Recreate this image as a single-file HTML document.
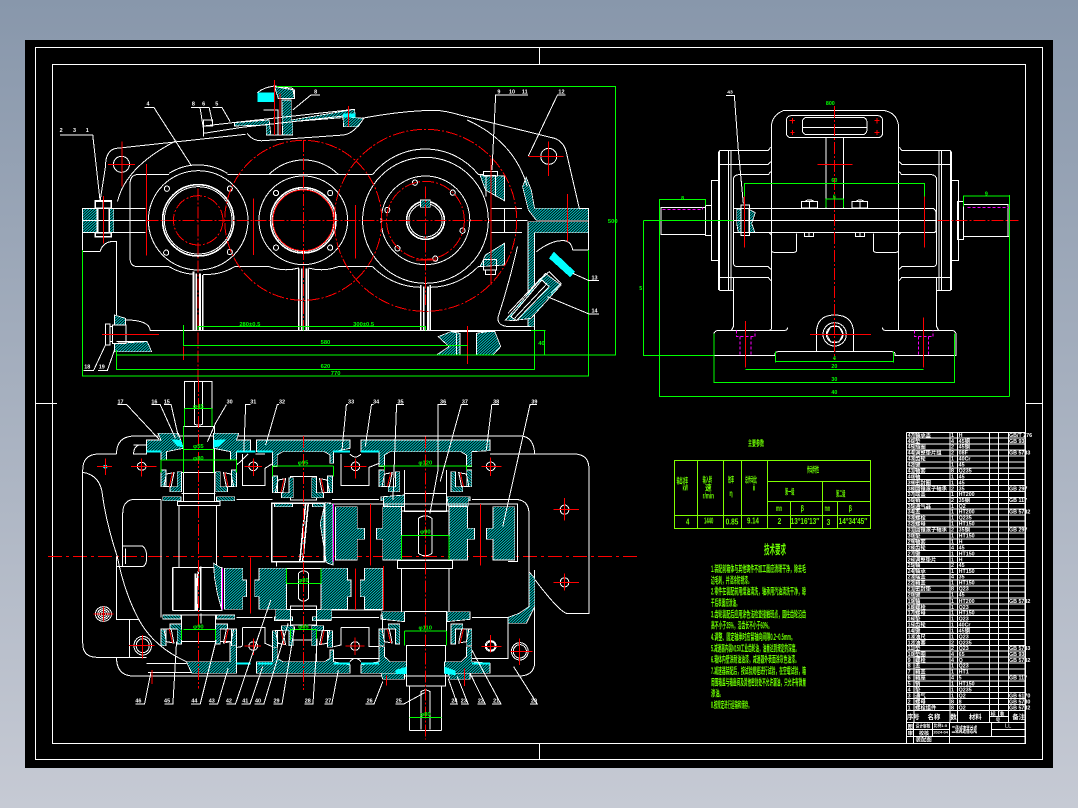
<!DOCTYPE html>
<html><head><meta charset="utf-8"><title>减速器装配图</title>
<style>
html,body{margin:0;padding:0;width:1078px;height:808px;overflow:hidden;background:linear-gradient(#8897ab,#c6cad4)}
svg{display:block;position:absolute;left:0;top:0;shape-rendering:crispEdges}
svg *{vector-effect:non-scaling-stroke}
.w{stroke:#fff;fill:none;stroke-width:1}
.t{stroke:#fff;fill:none;stroke-width:1.6}
.r{stroke:#f00;fill:none;stroke-width:1}
.rd{stroke:#f00;fill:none;stroke-width:1;stroke-dasharray:12 2 2 2}
.g{stroke:#0f0;fill:none;stroke-width:1}
.y{stroke:#80ff00;fill:none;stroke-width:1}
.m{stroke:#f0f;fill:none;stroke-width:1;stroke-dasharray:3 2}
.h{fill:url(#hatch);stroke:#fff;stroke-width:.8}
.c{fill:#0ff;stroke:none}
text{font-family:"Liberation Sans","Noto Sans CJK SC",sans-serif;font-weight:bold}
.lw{fill:#fff;font-size:15px;text-anchor:middle}
.lg{fill:#0f0;font-size:16px;text-anchor:middle}
.ly{fill:#6cff00;font-size:27px}
.bm{fill:#fff;font-size:16px}
</style></head><body>
<svg width="1078" height="808" viewBox="0 0 1078 808">
<defs>
<pattern id="hatch" patternUnits="userSpaceOnUse" width="8" height="8"><rect width="8" height="8" fill="#000"/><path d="M-2 2L2 -2M0 8L8 0M6 10L10 6" stroke="#0cc" stroke-width="1.9"/></pattern>
<g id="brg">
<polygon class="h" points="0,0 14,0 14,50 0,50"/>
<polygon class="h" points="45,5 57,5 57,65 25,65 25,50 45,50"/>
<polygon class="w" points="15,12 36,8 28,50 8,50"/>
<path class="r" d="M32 8L23 50"/>
<polygon class="h" points="5,80 55,80 55,92 5,92"/>
</g>
</defs>
<rect x="25" y="40" width="1028" height="728" fill="#000"/>
<path class="w" d="M35.5 47.5H1042.5V759.5H35.5ZM52.5 64.5H1025.5V743.5H52.5ZM35 403.5H57M1025 403.5H1043M539.5 47V64M539.5 743V760"/>
<path d="M48 556.5H640" stroke="#f00" stroke-width="1" stroke-dasharray="14 4 3 4" fill="none"/>

<!-- FRONT VIEW -->
<g transform="translate(60 70) scale(.36364 .33333)">
<polygon class="h" points="62,415 103,415 103,488 62,488"/>
<polygon class="h" points="135,415 148,415 148,488 135,488"/>
<polygon class="h" points="1305,415 1453,415 1453,451 1310,451 1288,420 1272,350 1282,322 1296,360"/>
<polygon class="h" points="1305,455 1453,455 1453,488 1305,488 1305,770 1287,770 1287,455"/>
<polygon class="h" points="1155,315 1222,318 1222,392 1170,360"/>
<polygon class="h" points="1170,555 1222,520 1222,585 1155,590"/>
<polygon class="h" points="1225,750 1335,610 1378,645 1295,745 1245,752"/>
<polygon class="c" points="1358,545 1416,605 1403,622 1345,565"/>
<polygon class="w" points="1240,740 1325,630 1345,650 1255,752" fill="#000" style="fill:#000"/>
<polygon class="h" points="150,735 180,745 180,765 150,765"/>
<polygon class="h" points="150,820 240,815 252,845 150,845"/>
<polygon class="h" points="1040,800 1075,785 1100,790 1100,855 1035,855 1070,830"/>
<polygon class="h" points="1145,790 1195,782 1212,830 1190,855 1145,855"/>
<polygon class="h" points="480,158 575,150 580,195 612,195 610,90 636,90 636,150 810,118 812,140 640,155 640,195 567,195 567,165 480,168"/>
<polygon class="h" points="778,140 835,145 820,170 780,170"/>
<rect class="c" x="778" y="130" width="35" height="12"/>
<polygon class="h" points="590,50 645,60 645,85 600,85"/>
<rect class="c" x="543" y="68" width="48" height="28"/>
<path class="w" d="M125 290Q125 240 155 235L510 193M830 145Q940 122 1030 121Q1060 122 1100 135L1360 205Q1385 215 1392 245L1428 415H1453V540H1410Q1405 510 1380 512Q1350 512 1310 545M125 290L110 395M158 395Q180 290 320 212M1120 150Q1250 215 1285 350M1258 530Q1235 640 1205 740Q1200 770 1240 770H1295"/>
<path class="w" d="M215 313Q195 315 193 335V570Q195 590 215 590H300M215 313H300M460 313H860M480 590H575M765 590H860M1150 313H1165M1150 590H1165"/>
<path class="w" d="M62 415H235M62 451H235M62 488H235M62 415V545H110Q120 510 155 515V735M1185 415H1270M1185 451H1285M1185 488H1270M1222 415V488"/>
<path class="w" d="M248 781H1305V855M180 750Q245 750 248 781M1305 781V770M240 815H155"/>
<path class="t" d="M367 605V780M375 610V780M385 610V780M393 615V780M657 595V780M665 595V780M677 595V780M683 595V780M992 645V780M1000 650V780M1012 650V780M1018 645V780"/>
<path class="w" d="M300 310A150 164 0 0 1 460 310M300 590A150 164 0 0 0 367 613M393 613A150 164 0 0 0 480 590M575 313A134 146 0 0 1 765 313M575 590A134 146 0 0 0 657 594M683 594A134 146 0 0 0 765 590M860 313A186 203 0 0 1 1150 313M860 590A186 203 0 0 0 992 652M1018 652A186 203 0 0 0 1150 590"/>
<ellipse class="w" cx="380" cy="451" rx="137" ry="149"/>
<ellipse class="t" cx="380" cy="451" rx="98" ry="107"/>
<ellipse class="w" cx="380" cy="451" rx="93" ry="101"/>
<ellipse class="w" cx="669" cy="451" rx="122" ry="133"/>
<ellipse class="t" cx="669" cy="451" rx="90" ry="98"/>
<ellipse class="w" cx="669" cy="451" rx="85" ry="93"/>
<ellipse class="w" cx="1005" cy="451" rx="173" ry="189"/>
<ellipse class="w" cx="1005" cy="451" rx="122" ry="133"/>
<ellipse class="t" cx="1005" cy="451" rx="52" ry="57"/>
<ellipse class="w" cx="1005" cy="451" rx="46" ry="50"/>
<rect class="h" x="991" y="390" width="27" height="22"/>
<ellipse class="w" cx="169" cy="283" rx="22" ry="24"/>
<ellipse class="w" cx="1344" cy="259" rx="22" ry="24"/>
<g class="w"><ellipse cx="294" cy="356" rx="7" ry="8"/><ellipse cx="467" cy="356" rx="7" ry="8"/><ellipse cx="292" cy="548" rx="7" ry="8"/><ellipse cx="467" cy="546" rx="7" ry="8"/><ellipse cx="594" cy="369" rx="7" ry="8"/><ellipse cx="743" cy="369" rx="7" ry="8"/><ellipse cx="594" cy="533" rx="7" ry="8"/><ellipse cx="743" cy="533" rx="7" ry="8"/><ellipse cx="976" cy="338" rx="7" ry="8"/><ellipse cx="1080" cy="368" rx="7" ry="8"/><ellipse cx="900" cy="420" rx="7" ry="8"/><ellipse cx="1107" cy="482" rx="7" ry="8"/><ellipse cx="928" cy="535" rx="7" ry="8"/><ellipse cx="1032" cy="566" rx="7" ry="8"/></g>
<path class="t" d="M103 415H135V488H103ZM97 393H141V415H97ZM97 488H141V500H97ZM119 393V415"/>
<path class="w" d="M1165 305H1203V318H1165ZM1172 318V380M1197 318V380M1165 568H1200V600H1165ZM1170 600H1198V613H1170Z"/>
<path class="w" d="M145 765H182V820H145ZM125 762H137V825H125ZM137 770H145M137 815H145"/>
<path class="w" d="M395 168L500 155L810 118M395 190L500 172L780 138M395 150H420V168H395ZM395 168V200M515 190Q530 215 560 212L780 195Q810 190 835 145M560 120H600V195M543 68Q560 52 590 48L640 55L645 85H600M1090 790V855M1145 790V855M1075 785H1195"/>
<path class="w" d="M1250 745L1340 640M1232 730L1322 625M1320 630L1345 605L1378 640L1350 670"/>
<path class="rd" d="M238 451H1185M380 355V930M669 210V780M1005 350V705"/>
<path class="r" d="M238 282V557M532 385V555M813 405V565M1185 265V645M1395 372V515M120 378V520M170 215V350M132 283H206M1288 259H1384M1344 215V318M590 30V195M605 70V195M793 108V170M115 793H272M1120 768V882M340 830V870M979 570H1035"/>
<g class="rd"><ellipse cx="669" cy="451" rx="216" ry="240"/><ellipse cx="1005" cy="451" rx="251" ry="273"/><ellipse cx="380" cy="451" rx="68" ry="74"/><ellipse cx="1005" cy="451" rx="107" ry="117"/></g>
<ellipse cx="669" cy="451" rx="83" ry="91" class="r"/>
<path class="g" d="M62 540V918H1453V540M595 49H1527V855H155M155 840V898H1305V781M340 765V826H1120M380 768V780M380 770H1005V782M1295 781H1335M1333 781V855M669 770V782"/>
<text class="lg" x="522" y="768">280±0.5</text><text class="lg" x="835" y="768">300±0.5</text><text class="lg" x="730" y="822">580</text><text class="lg" x="730" y="894">620</text><text class="lg" x="758" y="915">770</text><text class="lg" x="1324" y="825">40</text><text class="lg" x="1520" y="459">500</text>
<path class="w" d="M0 195H90L110 390M232 112H258L360 285M360 112H385L395 180M385 112H410L420 160M420 112H445L468 155M715 75H690L640 120M1287 75H1198L1188 300M1390 75H1368L1288 258M1482 632H1455L1410 610M1482 732H1455L1340 680M65 902H92L125 825M105 902H130L150 840"/>
<g class="lw"><text x="3" y="186">2</text><text x="40" y="186">3</text><text x="75" y="186">1</text><text x="242" y="106">4</text><text x="367" y="106">8</text><text x="395" y="106">6</text><text x="431" y="106">5</text><text x="703" y="71">8</text><text x="1207" y="71">9</text><text x="1243" y="71">10</text><text x="1278" y="71">11</text><text x="1379" y="71">12</text><text x="1470" y="628">13</text><text x="1470" y="728">14</text><text x="75" y="896">18</text><text x="115" y="896">19</text></g>
</g>

<!-- TOP VIEW (plan) -->
<g transform="translate(70 380) scale(.36364 .33333)">
<path class="w" d="M128 222Q128 170 175 168H1240Q1275 170 1278 222M128 222H75Q35 225 35 270V790Q35 832 75 832H210M1155 222H1390Q1427 225 1427 265V700H1365Q1340 690 1262 575M128 832Q128 888 175 888H1240Q1275 885 1278 850V570M145 400Q145 358 180 358H250M1105 358H1225Q1262 360 1262 400V680Q1262 712 1225 712H1105M145 400V560H128V718H190M128 530V560M35 277Q85 285 90 350Q100 430 130 530Q150 640 190 720Q230 800 320 845M145 498H200Q212 510 210 530Q212 555 200 560H145M152 505V552M163 832V718M250 358V712M458 358H557M720 358H850M458 712H557M720 712H850M1205 712V835L1105 835M215 878H355M210 850H320M175 195H210V222H175Q175 200 190 195"/>
<path class="w" d="M315 5H390V140H315ZM342 5V130Q342 135 353 135Q365 135 365 130V5M312 140H397V365H312ZM307 278H400M307 340H400M295 365H413V377H295ZM300 377V562M403 377V562M283 562H418V692H283Z"/>
<path class="t" d="M283 562V692M355 562Q345 620 350 692M345 580V690M360 560V690"/>
<path class="w" d="M307 705H400V785H307ZM295 785H440M360 700V730"/>
<path class="w" d="M933 918H1022V1048Q1022 1052 1018 1052H938Q933 1052 933 1048ZM965 1048V935Q978 925 990 935V1048M925 797H1032V918H925ZM920 695H1035V797M900 542H1052V565H900ZM912 565V695M1042 565V695M920 270V395H1035V270M920 340H1035"/>
<path class="w" d="M958 415Q978 400 995 415V520Q978 535 958 520ZM628 580Q642 565 656 580V655Q642 672 628 655Z"/>
<path class="w" d="M606 290H678V360H606ZM606 678H678V735H606ZM606 780H678V850M720 690H860M568 560V545H700M860 700V812"/>
<path class="w" d="M474 222V316H536V265L558 250M458 255Q474 240 490 222M536 222L510 222M745 222V316H822V262L850 250M770 222Q785 240 800 222M474 742V795Q474 802 458 802M474 742H536V790L557 800M745 742H822V800H850M745 742V795L725 800M770 845Q785 825 800 845M850 835H725"/>
<circle class="w" cx="197" cy="259" r="12"/><ellipse class="w" cx="504" cy="259" rx="12" ry="13"/><ellipse class="w" cx="785" cy="259" rx="12" ry="13"/><ellipse class="w" cx="1157" cy="259" rx="12" ry="13"/><ellipse class="w" cx="504" cy="798" rx="12" ry="13"/><ellipse class="w" cx="784" cy="798" rx="12" ry="13"/><ellipse class="w" cx="1157" cy="798" rx="15" ry="16"/><ellipse class="w" cx="1157" cy="798" rx="12" ry="13"/>
<ellipse class="w" cx="1237" cy="814" rx="23" ry="26"/><ellipse class="w" cx="1237" cy="814" rx="18" ry="20"/><ellipse class="w" cx="200" cy="797" rx="24" ry="28"/><ellipse class="w" cx="200" cy="797" rx="18" ry="21"/>
<ellipse class="w" cx="1360" cy="389" rx="12" ry="14"/><ellipse class="w" cx="1360" cy="607" rx="12" ry="14"/>
<circle class="c" cx="97" cy="260" r="6"/>
<g class="w"><circle cx="92" cy="702" r="22"/><circle cx="92" cy="702" r="16"/><circle cx="92" cy="702" r="11"/><circle cx="92" cy="702" r="6"/></g>
<polygon class="h" points="210,180 250,180 242,160 298,160 312,205 265,215 265,240 250,240 250,215 210,215"/>
<polygon class="h" points="496,180 458,180 464,160 395,160 395,205 441,215 441,240 458,240 458,215 496,215"/>
<polygon class="h" points="513,180 770,180 770,205 725,215 725,250 715,250 715,225 700,215 585,215 570,225 570,260 557,260 557,215 513,215"/>
<polygon class="h" points="800,180 1155,180 1155,212 1105,215 1105,260 1090,260 1090,225 1075,215 880,215 865,225 865,260 850,260 850,215 800,215"/>
<polygon class="h" points="320,845 440,845 440,790 458,770 458,880 335,880"/>
<polygon class="h" points="513,880 770,880 770,855 725,845 725,810 715,810 715,835 700,845 585,845 570,835 570,800 557,800 557,845 513,845"/>
<polygon class="h" points="800,880 925,880 925,845 880,845 865,830 865,800 850,800 850,845 800,855"/>
<polygon class="h" points="1030,880 1155,880 1155,850 1105,845 1105,800 1090,800 1090,830 1075,845 1030,845"/>
<polygon class="h" points="855,880 920,880 920,898 860,898"/>
<polygon class="h" points="1040,880 1100,880 1100,898 1045,898"/>
<polygon class="h" points="1262,575 1278,595 1278,680 1255,730 1205,730 1205,712 1235,700 1262,680"/>
<g class="c"><rect x="210" y="212" width="40" height="6"/><rect x="458" y="212" width="52" height="6"/><rect x="515" y="212" width="42" height="6"/><rect x="725" y="212" width="45" height="6"/><rect x="800" y="212" width="50" height="6"/><rect x="458" y="848" width="38" height="6"/><rect x="515" y="848" width="42" height="6"/><rect x="725" y="848" width="45" height="6"/><rect x="800" y="848" width="50" height="6"/><rect x="1105" y="848" width="50" height="6"/><polygon points="278,178 305,180 312,203 295,198"/><polygon points="430,178 395,180 395,203 412,198"/><polygon points="895,870 925,860 925,882 895,882"/><polygon points="1030,860 1060,872 1060,885 1030,882"/></g>
<use href="#brg" transform="translate(250 270)"/>
<use href="#brg" transform="translate(458 270) scale(-1 1)"/>
<use href="#brg" transform="translate(557 288)"/>
<use href="#brg" transform="translate(722 288) scale(-1 1)"/>
<use href="#brg" transform="translate(850 270)"/>
<use href="#brg" transform="translate(1105 270) scale(-1 1)"/>
<use href="#brg" transform="translate(250 797) scale(1 -1)"/>
<use href="#brg" transform="translate(458 797) scale(-1 -1)"/>
<use href="#brg" transform="translate(557 802) scale(1 -1)"/>
<use href="#brg" transform="translate(722 802) scale(-1 -1)"/>
<use href="#brg" transform="translate(850 797) scale(1 -1)"/>
<use href="#brg" transform="translate(1105 797) scale(-1 -1)"/>
<polygon class="h" points="730,380 790,380 790,445 810,445 810,478 790,478 790,540 730,540"/>
<polygon class="h" points="860,380 912,380 912,540 860,540 860,478 843,478 843,445 860,445"/>
<polygon class="h" points="1042,380 1093,380 1093,445 1112,445 1112,478 1093,478 1093,540 1042,540"/>
<polygon class="h" points="1163,380 1223,380 1223,540 1163,540 1163,478 1145,478 1145,445 1163,445"/>
<polygon class="h" points="425,565 475,565 475,600 485,600 485,650 475,650 475,688 425,688"/>
<polygon class="h" points="520,565 595,565 595,688 520,688 520,650 508,650 508,600 520,600"/>
<polygon class="h" points="690,565 763,565 763,600 773,600 773,650 763,650 763,688 690,688"/>
<polygon class="h" points="810,565 860,565 860,688 810,688 810,650 798,650 798,600 810,600"/>
<polygon class="h" points="702,368 723,372 723,555 705,548 688,430"/>
<polygon class="h" points="395,550 417,565 417,688 405,640 397,590"/>
<polygon class="h" points="862,350 920,345 920,380 862,378"/>
<polygon class="h" points="1037,350 1095,350 1095,378 1040,378"/>
<polygon class="h" points="857,695 920,695 920,725 860,718"/>
<polygon class="h" points="1037,695 1100,695 1100,718 1037,725"/>
<polygon class="h" points="566,688 606,688 606,720 566,720"/>
<polygon class="h" points="678,688 720,688 720,720 678,720"/>
<path class="t" d="M555 370H700V545H555ZM648 372Q640 450 632 545M655 372Q648 450 640 545"/>
<path class="w" d="M912 393H1042M912 540H1042M912 393V540M1042 393V540M595 565H690M595 688H690M725 372H1230V545H1205"/>
<path class="rd" d="M353 0V925M642 168V930M978 170V1078"/>
<path class="r" d="M827 372V557M1129 372V557M496 533V700M785 565V690M862 558V690M97 235V285M74 260H116M168 260H238M197 236V290M480 260H528M504 236V288M754 260H815M785 236V296M1132 260H1186M1157 232V288M1330 388H1400M1360 354V422M1330 607H1400M1360 580V632M480 798H525M504 775V825M758 798H810M784 772V825M1132 799H1187M1157 765V818M1212 814H1272M1236 775V855M162 797H232M199 765V835M65 702H120M92 680V725M225 870V912M870 886V916M1085 866V918"/>
<path d="M725 372V545M420 565V688" stroke="#f0f" fill="none"/>
<path class="g" d="M250 240H458M250 240V278M458 240V278M312 208H395M312 140V278M395 208V278M315 85H390M315 85V140M390 85V140M557 258H725M557 258V290M725 258V290M850 258H1105M865 258V270M1090 258V270M912 466H1042M912 466V540M1042 466V540M595 610H690M595 565V610M690 565V610M312 748H400M307 748V780M400 748V780M606 748H678M606 748V778M678 748V778M920 753H1035M920 753V797M1035 753V797M933 1012H1022"/>
<g class="lg"><text x="353" y="84">φ45</text><text x="353" y="204">φ55</text><text x="353" y="240">φ80</text><text x="641" y="254">φ95</text><text x="977" y="254">φ120</text><text x="977" y="461">φ90</text><text x="642" y="606">φ80</text><text x="353" y="746">φ90</text><text x="642" y="746">φ85</text><text x="977" y="749">φ110</text><text x="977" y="1008">φ80</text></g>
<path class="w" d="M130 74H156L245 178M224 74H248L290 175M258 74H278L298 170M430 74L400 130L378 185M496 74H483L478 215M575 74H570L538 195M765 74H760L748 210M834 74H829L812 200M918 74H898L888 360M1036 74H1012L1012 270L990 400M1095 74H1076L1018 305M1180 74H1160L1145 210M1284 74H1265L1190 440"/>
<path class="w" d="M180 972H205L222 880M260 972H283L293 785M333 972H358L402 780M382 972H406L435 865M430 972H455L552 660M472 972H495L530 860M507 972H533L600 730M560 972H583L618 740M645 972H668L680 775M700 972H720L738 870M812 972H836L860 905M895 972H918L975 938M1045 972H1065L1040 895M1075 972H1095L1065 890M1120 972H1142L1100 880M1160 972H1185L1105 810M1265 972H1285L1220 860"/>
<g class="lw"><text x="139" y="71">17</text><text x="232" y="71">16</text><text x="266" y="71">15</text><text x="439" y="71">30</text><text x="504" y="71">31</text><text x="583" y="71">32</text><text x="773" y="71">33</text><text x="842" y="71">34</text><text x="909" y="71">35</text><text x="1026" y="71">36</text><text x="1086" y="71">37</text><text x="1172" y="71">38</text><text x="1277" y="71">39</text>
<text x="188" y="968">46</text><text x="267" y="968">45</text><text x="342" y="968">44</text><text x="390" y="968">43</text><text x="437" y="968">42</text><text x="482" y="968">41</text><text x="517" y="968">40</text><text x="568" y="968">29</text><text x="654" y="968">28</text><text x="710" y="968">27</text><text x="824" y="968">26</text><text x="904" y="968">25</text><text x="1057" y="968">24</text><text x="1083" y="968">23</text><text x="1130" y="968">22</text><text x="1172" y="968">21</text><text x="1276" y="968">20</text></g>
</g>

<!-- SIDE VIEW -->
<g transform="translate(640 70) scale(.33333)">
<path class="h" d="M290 418H303V488H295L290 460Z"/>
<path class="h" d="M327 418L346 428L335 460L345 488H327Z"/>
<path class="w" d="M394 240V170Q396 135 430 122H735Q772 130 776 170V780M394 240V775Q394 780 388 781"/>
<rect class="w" x="439" y="137" width="289" height="66" rx="14"/><rect class="w" x="487" y="142" width="194" height="52" rx="14"/>
<path class="w" d="M487 172H681M558 203V415M611 203V415M280 415H880Q888 420 888 430V480Q888 488 880 488H280M280 451H888M303 405H328V497H303Z"/>
<g id="sv"><path class="w" d="M238 241H385L392 232M238 283H385L392 275M295 314H385L392 305M295 314Q280 316 280 330V580Q282 590 292 590H385L392 598M238 622H385L392 632M238 661H280M238 241V661M235 245V660M265 241V661M273 241V661M280 622V770L275 780M214 331H235V572H214ZM470 490V540Q470 547 462 547H402Q396 547 394 540M388 488L394 495M443 772Q442 781 435 781H235Q225 782 222 790V856H405V850Q408 845 415 845H584"/></g>
<use href="#sv" transform="translate(1170 0) scale(-1 1)"/>
<path class="w" d="M197 406H214V496H197ZM63 412H197V494H63ZM58 412V490M953 394H971V509H953ZM971 403H1104V499H971ZM1104 403V499H1108M484 394H533V414H484ZM508 394V414M495 394Q508 385 522 394M636 394H683V414H636ZM660 394V414M648 394Q660 385 672 394M493 488H521V500H493ZM507 488V500M646 488H674V500H646ZM660 488V500"/>
<path class="w" d="M529 845V790Q530 735 584 735Q640 735 641 790V845"/>
<circle class="w" cx="584" cy="793" r="35"/><circle class="w" cx="584" cy="793" r="25"/><polygon class="w" points="560,793 572,770 597,770 609,793 597,816 572,816"/>
<path class="m" d="M68 418H188V412M982 412H1110M289 782V800H345V782M300 800V856M333 800V856M823 782V800H879V782M835 800V856M865 800V856"/>
<path class="rd" d="M584 108V870M893 451H1135"/>
<path class="r" d="M313 380V533M853 380V533M533 283H638M510 793H693M316 753V893M850 743V893M449 152H465M457 144V160M703 152H719M711 144V160M452 187H463M457 180V195M704 187H718M711 180V195"/>
<path class="g" d="M313 380V340H853V380M58 490V388H197V406M970 410V378H1108M1108 375V980M58 490V980H1108M10 451H280M10 451V856H222M222 790V937H943V790M316 898H850M406 845V878M406 875H760M760 845V878M558 412V387H611V412"/>
<g class="lg"><text x="571" y="105">800</text><text x="583" y="336">60</text><text x="583" y="386">6</text><text x="583" y="870">4</text><text x="583" y="894">20</text><text x="583" y="933">30</text><text x="583" y="972">40</text><text x="128" y="390">8</text><text x="1039" y="376">9</text><text x="2" y="660">5</text></g>
<path class="w" d="M258 76H283L295 240L310 400"/>
<text class="lw" x="270" y="71">43</text>
</g>

<!-- TABLE + NOTES -->
<g transform="translate(660 420) scale(.33333)">
<path class="y" d="M44 122H632V325H44ZM44 286H632M322 185H632M322 245H632M112 122V325M190 122V325M244 122V325M322 122V325M391 245V325M487 185V325M532 245V325"/>
<g class="ly" style="font-size:24px">
<text x="264" y="78" textLength="48" lengthAdjust="spacingAndGlyphs">主要参数</text>
<text x="50" y="190" textLength="34" lengthAdjust="spacingAndGlyphs">输出功率</text><text x="68" y="212" textLength="16" lengthAdjust="spacingAndGlyphs">kW</text>
<text x="128" y="188" textLength="28" lengthAdjust="spacingAndGlyphs">输入转</text><text x="135" y="212" textLength="20" lengthAdjust="spacingAndGlyphs">速</text><text x="128" y="236" textLength="34" lengthAdjust="spacingAndGlyphs">r/min</text>
<text x="204" y="188" textLength="18" lengthAdjust="spacingAndGlyphs">效率</text><text x="208" y="228" textLength="10" lengthAdjust="spacingAndGlyphs">η</text>
<text x="255" y="188" textLength="36" lengthAdjust="spacingAndGlyphs">总传动比</text><text x="278" y="212" textLength="8" lengthAdjust="spacingAndGlyphs">i</text>
<text x="441" y="158" textLength="36" lengthAdjust="spacingAndGlyphs">传动特性</text>
<text x="375" y="223" textLength="28" lengthAdjust="spacingAndGlyphs">第一级</text><text x="528" y="229" textLength="28" lengthAdjust="spacingAndGlyphs">第二级</text>
<text x="348" y="273" textLength="18" lengthAdjust="spacingAndGlyphs">mn</text><text x="422" y="273" textLength="10" lengthAdjust="spacingAndGlyphs">β</text><text x="494" y="273" textLength="16" lengthAdjust="spacingAndGlyphs">mn</text><text x="566" y="273" textLength="10" lengthAdjust="spacingAndGlyphs">β</text>
<text x="78" y="313" textLength="10" lengthAdjust="spacingAndGlyphs">4</text><text x="132" y="310" textLength="28" lengthAdjust="spacingAndGlyphs">1440</text><text x="197" y="313" textLength="38" lengthAdjust="spacingAndGlyphs">0.85</text><text x="261" y="311" textLength="36" lengthAdjust="spacingAndGlyphs">9.14</text><text x="353" y="312" textLength="11" lengthAdjust="spacingAndGlyphs">2</text><text x="392" y="312" textLength="86" lengthAdjust="spacingAndGlyphs">13°16′13″</text><text x="500" y="315" textLength="11" lengthAdjust="spacingAndGlyphs">3</text><text x="536" y="312" textLength="86" lengthAdjust="spacingAndGlyphs">14°34′45″</text>
</g>
<text class="ly" x="312" y="402" textLength="66" lengthAdjust="spacingAndGlyphs" style="font-size:38px">技术要求</text>
<g class="ly">
<text x="153" y="456" textLength="285" lengthAdjust="spacingAndGlyphs">1.装配前箱体与其他铸件不加工面应清理干净，除去毛</text>
<text x="153" y="490" textLength="122" lengthAdjust="spacingAndGlyphs">边毛刺，并浸涂防锈漆。</text>
<text x="153" y="524" textLength="285" lengthAdjust="spacingAndGlyphs">2.零件在装配前用煤油清洗，轴承用汽油清洗干净，晾</text>
<text x="153" y="558" textLength="86" lengthAdjust="spacingAndGlyphs">干后表面应涂油。</text>
<text x="153" y="592" textLength="285" lengthAdjust="spacingAndGlyphs">3.齿轮装配后应用涂色法检查接触斑点，圆柱齿轮沿齿</text>
<text x="153" y="626" textLength="183" lengthAdjust="spacingAndGlyphs">高不小于35%，沿齿长不小于60%。</text>
<text x="153" y="660" textLength="252" lengthAdjust="spacingAndGlyphs">4.调整、固定轴承时应留轴向间隙0.2~0.5mm。</text>
<text x="153" y="694" textLength="264" lengthAdjust="spacingAndGlyphs">5.减速器内装N150工业齿轮油，油量达到规定的深度。</text>
<text x="153" y="728" textLength="264" lengthAdjust="spacingAndGlyphs">6.箱体内壁涂耐油油漆，减速器外表面涂灰色油漆。</text>
<text x="153" y="762" textLength="285" lengthAdjust="spacingAndGlyphs">7.减速器装配后，按试验规程进行试验，在空载试验，箱</text>
<text x="153" y="796" textLength="285" lengthAdjust="spacingAndGlyphs">周围箱盖与箱座间及其他密封处不允许漏油，只允许有微量</text>
<text x="153" y="830" textLength="38" lengthAdjust="spacingAndGlyphs">渗油。</text>
<text x="153" y="864" textLength="122" lengthAdjust="spacingAndGlyphs">8.按规定进行运输和储存。</text>
</g>
</g>

<!-- BOM -->
<g transform="translate(895 425) scale(.33333)">
<path class="w" d="M35 22H390M35 39.7H390M35 57.5H390M35 75.2H390M35 93H390M35 110.7H390M35 128.5H390M35 146.2H390M35 164H390M35 181.7H390M35 199.5H390M35 217.2H390M35 235H390M35 252.7H390M35 270.5H390M35 288.2H390M35 306H390M35 323.7H390M35 341.5H390M35 359.2H390M35 377H390M35 394.7H390M35 412.5H390M35 430.2H390M35 448H390M35 465.7H390M35 483.5H390M35 501.2H390M35 519H390M35 536.7H390M35 554.5H390M35 572.2H390M35 590H390M35 607.7H390M35 625.5H390M35 643.2H390M35 661H390M35 678.7H390M35 696.5H390M35 714.2H390M35 732H390M35 749.7H390M35 767.5H390M35 785.2H390M35 803H390M35 820.7H390M35 838.5H390M35 856H390M35 892H390M35 913H163M290 913H390M35 935H390"/>
<path class="w" d="M35 22V954M57 22V892M165 22V892M187 22V892M283 22V892M310 22V875M340 22V892M390 22V954M163 892V954M290 892V935M55 892V954M112 892V935M283 875H340"/>
<g class="bm">
<text x="38" y="36">47</text><text x="60" y="36">轴承盖</text><text x="168" y="36">1</text><text x="191" y="36">H</text><text x="342" y="36">GB/T 276</text>
<text x="38" y="54">46</text><text x="60" y="54">垫</text><text x="168" y="54">4</text><text x="191" y="54">45钢</text><text x="342" y="54">GB 93</text>
<text x="38" y="71">45</text><text x="60" y="71">挡圈</text><text x="168" y="71">2</text><text x="191" y="71">45钢</text>
<text x="38" y="89">44</text><text x="60" y="89">调整垫片组</text><text x="168" y="89">2</text><text x="191" y="89">08F</text><text x="342" y="89">GB 5783</text>
<text x="38" y="107">43</text><text x="60" y="107">齿轮</text><text x="168" y="107">1</text><text x="191" y="107">40Cr</text>
<text x="38" y="125">42</text><text x="60" y="125">键</text><text x="168" y="125">1</text><text x="191" y="125">45</text>
<text x="38" y="142">41</text><text x="60" y="142">轴套</text><text x="168" y="142">8</text><text x="191" y="142">Q235</text>
<text x="38" y="160">40</text><text x="60" y="160">轴</text><text x="168" y="160">1</text><text x="191" y="160">45</text>
<text x="38" y="178">39</text><text x="60" y="178">密封圈</text><text x="168" y="178">1</text><text x="191" y="178">45</text>
<text x="38" y="196">38</text><text x="60" y="196">圆锥滚子轴承</text><text x="168" y="196">2</text><text x="191" y="196">35</text><text x="342" y="196">GB 297</text>
<text x="38" y="213">37</text><text x="60" y="213">端盖</text><text x="168" y="213">1</text><text x="191" y="213">HT200</text>
<text x="38" y="231">36</text><text x="60" y="231">销</text><text x="168" y="231">2</text><text x="191" y="231">35钢</text><text x="342" y="231">GB 117</text>
<text x="38" y="249">35</text><text x="60" y="249">通气器</text><text x="168" y="249">1</text><text x="191" y="249">Q2</text>
<text x="38" y="266">34</text><text x="60" y="266">盖</text><text x="168" y="266">1</text><text x="191" y="266">HT200</text><text x="342" y="266">GB 5782</text>
<text x="38" y="284">33</text><text x="60" y="284">螺栓</text><text x="168" y="284">1</text><text x="191" y="284">Q235</text>
<text x="38" y="302">32</text><text x="60" y="302">螺母</text><text x="168" y="302">1</text><text x="191" y="302">HT150</text>
<text x="38" y="320">31</text><text x="60" y="320">圆锥滚子轴承</text><text x="168" y="320">2</text><text x="191" y="320">35钢</text><text x="342" y="320">GB 297</text>
<text x="38" y="338">30</text><text x="60" y="338">垫</text><text x="168" y="338">1</text><text x="191" y="338">HT150</text>
<text x="38" y="356">29</text><text x="60" y="356">轴套</text><text x="168" y="356">1</text><text x="191" y="356">H</text>
<text x="38" y="373">28</text><text x="60" y="373">齿轮</text><text x="168" y="373">4</text><text x="191" y="373">45</text>
<text x="38" y="391">27</text><text x="60" y="391">键</text><text x="168" y="391">1</text><text x="191" y="391">HT150</text>
<text x="38" y="409">26</text><text x="60" y="409">调整垫片</text><text x="168" y="409">1</text><text x="191" y="409">H</text>
<text x="38" y="426">25</text><text x="60" y="426">轴</text><text x="168" y="426">2</text><text x="191" y="426">45</text>
<text x="38" y="444">24</text><text x="60" y="444">轴承</text><text x="168" y="444">1</text><text x="191" y="444">HT150</text>
<text x="38" y="461">23</text><text x="60" y="461">端盖</text><text x="168" y="461">4</text><text x="191" y="461">35</text>
<text x="38" y="479">22</text><text x="60" y="479">箱盖</text><text x="168" y="479">1</text><text x="191" y="479">HT150</text>
<text x="38" y="496">21</text><text x="60" y="496">密封垫</text><text x="168" y="496">8</text><text x="191" y="496">Q23</text>
<text x="38" y="514">20</text><text x="60" y="514">键</text><text x="168" y="514">1</text><text x="191" y="514">45</text>
<text x="38" y="534">19</text><text x="60" y="534">轴</text><text x="168" y="534">1</text><text x="191" y="534">HT200</text><text x="342" y="534">GB 5782</text>
<text x="38" y="552">18</text><text x="60" y="552">螺栓</text><text x="168" y="552">1</text><text x="191" y="552">Q23</text>
<text x="38" y="569">17</text><text x="60" y="569">螺母</text><text x="168" y="569">1</text><text x="191" y="569">HT150</text>
<text x="38" y="587">16</text><text x="60" y="587">垫</text><text x="168" y="587">1</text><text x="191" y="587">Q23</text>
<text x="38" y="605">15</text><text x="60" y="605">齿轮</text><text x="168" y="605">1</text><text x="191" y="605">40Cr</text>
<text x="38" y="622">14</text><text x="60" y="622">键</text><text x="168" y="622">1</text><text x="191" y="622">45钢</text>
<text x="38" y="640">13</text><text x="60" y="640">油尺</text><text x="168" y="640">1</text><text x="191" y="640">Q23</text>
<text x="38" y="658">12</text><text x="60" y="658">油塞</text><text x="168" y="658">2</text><text x="191" y="658">Q235</text>
<text x="38" y="675">11</text><text x="60" y="675">垫</text><text x="168" y="675">2</text><text x="191" y="675">Q23</text><text x="342" y="675">GB 5783</text>
<text x="38" y="693">10</text><text x="60" y="693">垫圈</text><text x="168" y="693">4</text><text x="191" y="693">65</text><text x="342" y="693">GB 93</text>
<text x="38" y="711">9</text><text x="60" y="711">螺栓</text><text x="168" y="711">4</text><text x="191" y="711">Q</text><text x="342" y="711">GB 5782</text>
<text x="38" y="728">8</text><text x="60" y="728">盖</text><text x="168" y="728">1</text><text x="191" y="728">Q23</text>
<text x="38" y="746">7</text><text x="60" y="746">箱盖</text><text x="168" y="746">1</text><text x="191" y="746">HT1</text>
<text x="38" y="764">6</text><text x="60" y="764">箱座</text><text x="168" y="764">4</text><text x="191" y="764">5</text><text x="342" y="764">GB 117</text>
<text x="38" y="782">5</text><text x="60" y="782">销</text><text x="168" y="782">1</text><text x="191" y="782">HT150</text>
<text x="38" y="800">4</text><text x="60" y="800">垫</text><text x="168" y="800">1</text><text x="191" y="800">Q235</text>
<text x="38" y="818">3</text><text x="60" y="818">通气</text><text x="168" y="818">1</text><text x="191" y="818">Q2</text><text x="342" y="818">GB 6170</text>
<text x="38" y="835">2</text><text x="60" y="835">螺母</text><text x="168" y="835">8</text><text x="191" y="835">8</text><text x="342" y="835">GB 5780</text>
<text x="38" y="853">1</text><text x="60" y="853">螺栓组件</text><text x="168" y="853">8</text><text x="191" y="853">Q2</text><text x="342" y="853">GB 5782</text>
<text x="36" y="882" style="font-size:19px">序号</text><text x="98" y="882" style="font-size:19px">名称</text><text x="166" y="882" style="font-size:19px">数</text><text x="222" y="882" style="font-size:19px">材料</text><text x="287" y="872" style="font-size:15px">标</text><text x="313" y="872" style="font-size:15px">准</text><text x="302" y="890" style="font-size:14px">号</text><text x="352" y="882" style="font-size:19px">备注</text>
<text x="38" y="910">图</text><text x="62" y="908" style="font-size:14px" textLength="44" lengthAdjust="spacingAndGlyphs">设计审核</text><text x="116" y="906" style="font-size:12px" textLength="40" lengthAdjust="spacingAndGlyphs">比例1:5</text>
<text x="38" y="930">审</text><text x="72" y="930" style="font-size:15px">校核</text><text x="115" y="926" style="font-size:12px" textLength="44" lengthAdjust="spacingAndGlyphs">2024-04</text>
<text x="170" y="922" style="font-size:26px" textLength="76" lengthAdjust="spacingAndGlyphs">二级减速器总成</text>
<text x="330" y="908" style="font-weight:normal;font-size:17px">LL</text>
<text x="62" y="950" style="font-size:18px" textLength="48" lengthAdjust="spacingAndGlyphs">装配图</text>
</g>
</g>
</svg>
</body></html>
